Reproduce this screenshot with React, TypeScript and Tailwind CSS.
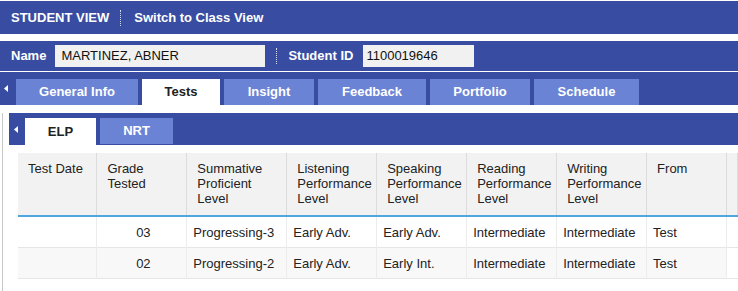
import React from 'react';

const mainTabs = ['General Info', 'Tests', 'Insight', 'Feedback', 'Portfolio', 'Schedule'];
const tabWidths = ['w-[122px]', 'w-[78px]', 'w-[90px]', 'w-[108px]', 'w-[100px]', 'w-[105px]'];

const headers = [
  ['Test Date'],
  ['Grade', 'Tested'],
  ['Summative', 'Proficient', 'Level'],
  ['Listening', 'Performance', 'Level'],
  ['Speaking', 'Performance', 'Level'],
  ['Reading', 'Performance', 'Level'],
  ['Writing', 'Performance', 'Level'],
  ['From'],
];
const colWidths = ['w-[79px]', 'w-[90px]', 'w-[100px]', 'w-[90px]', 'w-[90px]', 'w-[90px]', 'w-[90px]', 'w-[80px]'];

const rows = [
  ['', '03', 'Progressing-3', 'Early Adv.', 'Early Adv.', 'Intermediate', 'Intermediate', 'Test'],
  ['', '02', 'Progressing-2', 'Early Adv.', 'Early Int.', 'Intermediate', 'Intermediate', 'Test'],
];

const LeftArrow = () => (
  <svg width="4" height="7" viewBox="0 0 4 7" className="shrink-0">
    <path d="M4 0 L0 3.5 L4 7 Z" fill="#ffffff" />
  </svg>
);

const DotSep = () => <div className="h-[16px] border-l border-dotted border-white/80" />;

export default function App() {
  return (
    <div className="w-[738px] h-[291px] bg-white overflow-hidden text-[13px] text-[#222]" style={{ fontFamily: '"Liberation Sans", Arial, sans-serif' }}>
      {/* Top bar */}
      <div className="h-[33px] mt-[1px] bg-[#384da1] flex items-center px-[11px] gap-[11px] text-white font-bold">
        <span>STUDENT VIEW</span>
        <DotSep />
        <span className="ml-[2px]">Switch to Class View</span>
      </div>

      {/* Student block */}
      <div className="mt-[7px] bg-[#384da1]">
        <div className="h-[31px] flex items-center pl-[11px] text-white font-bold border-b border-white">
          <span>Name</span>
          <div className="ml-[9px] w-[210px] h-[22px] bg-[#f1f1f1] flex items-center px-[6px] text-[#111] font-normal">MARTINEZ, ABNER</div>
          <div className="ml-[11px] mr-[11px]"><DotSep /></div>
          <span>Student ID</span>
          <div className="ml-[10px] w-[111px] h-[22px] bg-[#f1f1f1] flex items-center px-[3px] text-[#111] font-normal">1100019646</div>
        </div>
        <div className="h-[33px] flex items-end pl-[4px]">
          <div className="self-center mr-[8px]"><LeftArrow /></div>
          <div className="flex gap-[4px]">
            {mainTabs.map((t, i) => (
              <div
                key={t}
                className={`${tabWidths[i]} h-[26px] flex items-center justify-center font-bold ${
                  t === 'Tests' ? 'bg-white text-[#222]' : 'bg-[#6b83d4] text-white'
                }`}
              >
                {t}
              </div>
            ))}
          </div>
        </div>
      </div>

      {/* Tests panel */}
      <div className="ml-[2px] mt-[8px] border-l border-[#c8c8c8] pl-[6px] h-[200px]">
        <div className="h-[32px] bg-[#384da1] flex items-end pl-[5px]">
          <div className="self-center mr-[7px]"><LeftArrow /></div>
          <div className="flex gap-[4px] items-start">
            <div className="w-[71px] h-[27px] bg-white flex items-center justify-center font-bold">ELP</div>
            <div className="w-[73px] h-[26px] bg-[#6b83d4] text-white flex items-center justify-center font-bold">NRT</div>
          </div>
        </div>

        <div className="pl-[9px] pt-[8px]">
          <table className="border-collapse table-fixed">
            <thead>
              <tr className="bg-[#f2f2f2] border-b-[2px] border-[#4ea5e0]">
                {headers.map((h, i) => (
                  <th
                    key={i}
                    className={`${colWidths[i]} h-[63px] align-top text-left font-normal pt-[8px] pl-[10px] leading-[15px] border-r border-[#dcdcdc]`}
                  >
                    <div className="overflow-hidden">
                      {h.map((w, k) => (
                        <div key={k} className="whitespace-nowrap">{w}</div>
                      ))}
                    </div>
                  </th>
                ))}
                <th className="w-[11px] border-r border-[#dcdcdc]" />
              </tr>
            </thead>
            <tbody>
              {rows.map((r, ri) => (
                <tr key={ri} className={`${ri === 1 ? 'bg-[#f8f8f8]' : 'bg-white'} border-b border-[#e6e6e6]`}>
                  {r.map((c, ci) => (
                    <td
                      key={ci}
                      className={`h-[31px] pt-[2px] border-r border-[#ececec] whitespace-nowrap overflow-hidden ${
                        ci === 1 ? 'text-center pl-[3px]' : 'text-left pl-[6px]'
                      }`}
                    >
                      {c}
                    </td>
                  ))}
                  <td className="bg-white" />
                </tr>
              ))}
            </tbody>
          </table>
        </div>
      </div>
    </div>
  );
}
